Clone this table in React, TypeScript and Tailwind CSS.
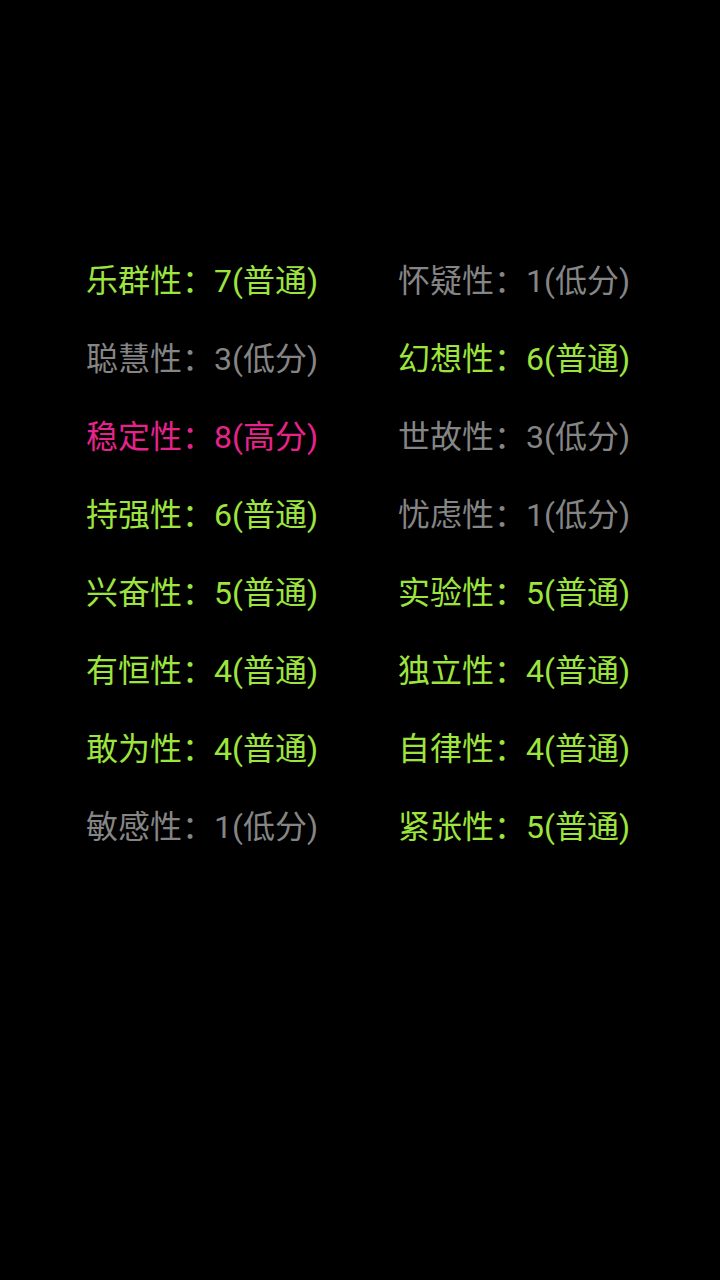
import React from "react";

type Level = "普通" | "低分" | "高分";

const items: [string, number, Level][] = [
  ["乐群性", 7, "普通"],
  ["怀疑性", 1, "低分"],
  ["聪慧性", 3, "低分"],
  ["幻想性", 6, "普通"],
  ["稳定性", 8, "高分"],
  ["世故性", 3, "低分"],
  ["持强性", 6, "普通"],
  ["忧虑性", 1, "低分"],
  ["兴奋性", 5, "普通"],
  ["实验性", 5, "普通"],
  ["有恒性", 4, "普通"],
  ["独立性", 4, "普通"],
  ["敢为性", 4, "普通"],
  ["自律性", 4, "普通"],
  ["敏感性", 1, "低分"],
  ["紧张性", 5, "普通"],
];

const colorFor: Record<Level, string> = {
  普通: "text-[#9de53e]",
  低分: "text-[#858585]",
  高分: "text-[#e6238a]",
};

export default function App() {
  return (
    <div
      className="min-h-[1280px] w-[720px] bg-black pt-[242px] pl-[86px]"
      style={{ fontFamily: "Roboto, 'Noto Sans CJK SC', sans-serif" }}
    >
      <div className="grid grid-cols-[312px_1fr]">
        {items.map(([name, score, level]) => (
          <div
            key={name}
            className={`flex h-[78px] items-center text-[32px] whitespace-nowrap ${colorFor[level]}`}
          >
            {name}：{score}({level})
          </div>
        ))}
      </div>
    </div>
  );
}
